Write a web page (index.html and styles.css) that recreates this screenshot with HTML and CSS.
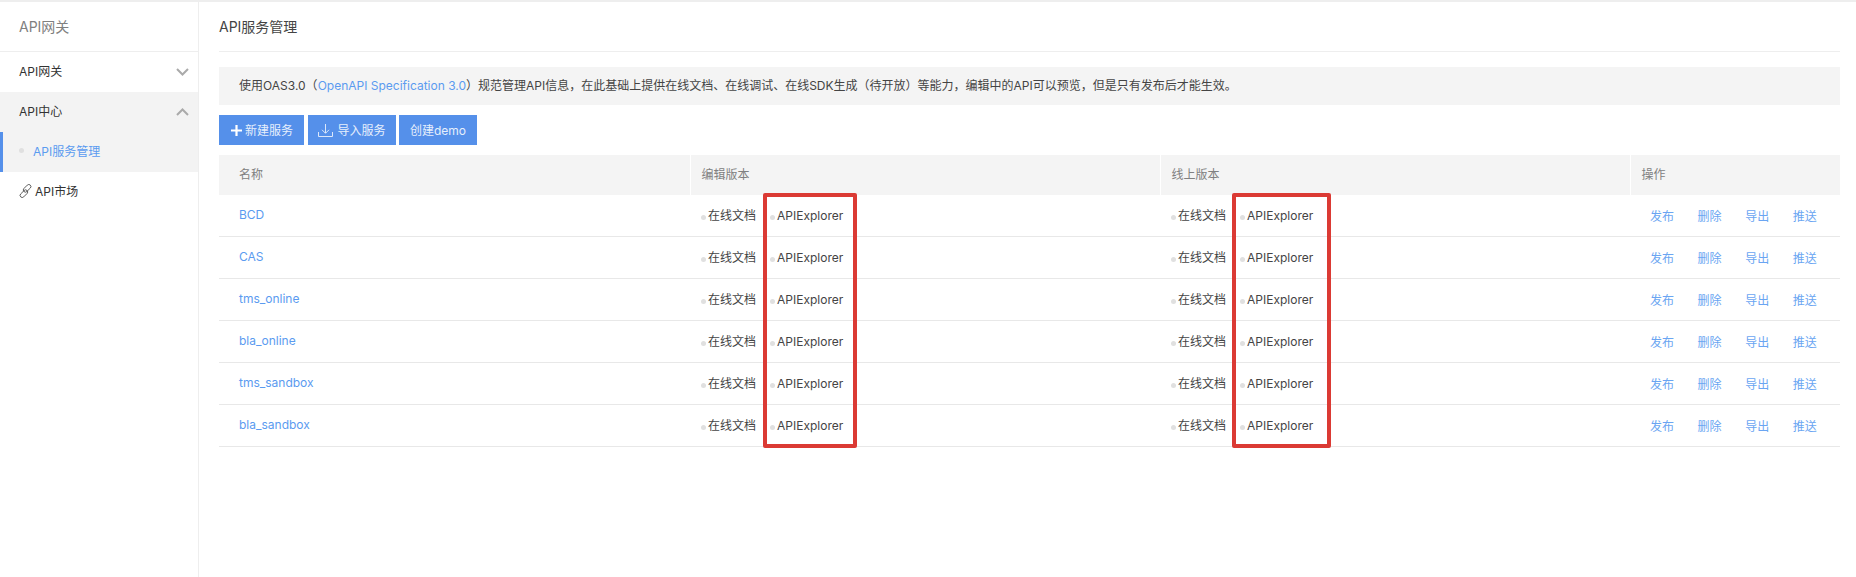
FILE: index.html
```html
<!DOCTYPE html>
<html>
	<head>
		<meta charset="utf-8" />
		<link rel="stylesheet" href="styles.css">
		<title>API服务管理</title>
	</head>
	<body>
		<div class="page">
			<div class="side">
				<div class="side-hd">API网关</div>
				<div class="menu">
					<span>API网关</span>
					<svg class="arrow" width="13" height="8" viewBox="0 0 13 8"><path d="M1 1l5.500 5.500L12 1" fill="none" stroke="#aaa" stroke-width="2"/></svg>
				</div>
				<div class="menu menu-open">
					<span>API中心</span>
					<svg class="arrow" width="13" height="8" viewBox="0 0 13 8"><path d="M1 7l5.500-5.500L12 7" fill="none" stroke="#aaa" stroke-width="2"/></svg>
				</div>
				<div class="sub"><i class="dot"></i><a>API服务管理</a></div>
				<div class="menu menu-link">
					<svg width="13" height="14" viewBox="0 0 13 14"><g fill="none" stroke="#555" stroke-width=".9"><rect x="6" y="-.2" width="4.200" height="9" rx="2.100" transform="rotate(45 8.100 4.300)"/><rect x="2.800" y="5.200" width="4.200" height="9" rx="2.100" transform="rotate(45 4.900 9.700)"/></g></svg>
					<span>API市场</span>
				</div>
			</div>
			<div class="main">
				<div class="title">API服务管理</div>
				<div class="info">使用OAS3.0（<a>OpenAPI Specification 3.0</a>）规范管理API信息，在此基础上提供在线文档、在线调试、在线SDK生成（待开放）等能力，编辑中的API可以预览，但是只有发布后才能生效。</div>
				<div class="btns">
					<a class="btn btn-new">
						<svg width="13" height="13" viewBox="0 0 13 13"><path d="M6.500 1v11M1 6.500h11" stroke="#fff" stroke-width="2.200"/></svg>
						新建服务
					</a>
					<a class="btn btn-import">
						<svg width="15" height="14" viewBox="0 0 15 14"><path d="M7.500 1v9M4 6.800l3.500 3.500L11 6.800M.5 9v4.500h14V9" fill="none" stroke="#dbe7fa" stroke-width="1"/></svg>
						导入服务
					</a>
					<a class="btn btn-demo">创建demo</a>
				</div>
				<div class="tbl-wrap">
					<table class="tbl">
						<colgroup>
							<col class="c-name"><col class="c-ver"><col class="c-ver2"><col class="c-op">
						</colgroup>
						<thead>
							<tr><th class="th-name">名称</th><th>编辑版本</th><th>线上版本</th><th>操作</th></tr>
						</thead>
						<tbody>
							<tr>
								<td class="td-name"><a>BCD</a></td>
								<td><span class="doc"><i class="dot"></i>在线文档</span><span class="doc"><i class="dot"></i>APIExplorer</span></td>
								<td><span class="doc"><i class="dot"></i>在线文档</span><span class="doc"><i class="dot"></i>APIExplorer</span></td>
								<td class="ops"><a>发布</a><a>删除</a><a>导出</a><a>推送</a></td>
							</tr>
							<tr>
								<td class="td-name"><a>CAS</a></td>
								<td><span class="doc"><i class="dot"></i>在线文档</span><span class="doc"><i class="dot"></i>APIExplorer</span></td>
								<td><span class="doc"><i class="dot"></i>在线文档</span><span class="doc"><i class="dot"></i>APIExplorer</span></td>
								<td class="ops"><a>发布</a><a>删除</a><a>导出</a><a>推送</a></td>
							</tr>
							<tr>
								<td class="td-name"><a>tms_online</a></td>
								<td><span class="doc"><i class="dot"></i>在线文档</span><span class="doc"><i class="dot"></i>APIExplorer</span></td>
								<td><span class="doc"><i class="dot"></i>在线文档</span><span class="doc"><i class="dot"></i>APIExplorer</span></td>
								<td class="ops"><a>发布</a><a>删除</a><a>导出</a><a>推送</a></td>
							</tr>
							<tr>
								<td class="td-name"><a>bla_online</a></td>
								<td><span class="doc"><i class="dot"></i>在线文档</span><span class="doc"><i class="dot"></i>APIExplorer</span></td>
								<td><span class="doc"><i class="dot"></i>在线文档</span><span class="doc"><i class="dot"></i>APIExplorer</span></td>
								<td class="ops"><a>发布</a><a>删除</a><a>导出</a><a>推送</a></td>
							</tr>
							<tr>
								<td class="td-name"><a>tms_sandbox</a></td>
								<td><span class="doc"><i class="dot"></i>在线文档</span><span class="doc"><i class="dot"></i>APIExplorer</span></td>
								<td><span class="doc"><i class="dot"></i>在线文档</span><span class="doc"><i class="dot"></i>APIExplorer</span></td>
								<td class="ops"><a>发布</a><a>删除</a><a>导出</a><a>推送</a></td>
							</tr>
							<tr>
								<td class="td-name"><a>bla_sandbox</a></td>
								<td><span class="doc"><i class="dot"></i>在线文档</span><span class="doc"><i class="dot"></i>APIExplorer</span></td>
								<td><span class="doc"><i class="dot"></i>在线文档</span><span class="doc"><i class="dot"></i>APIExplorer</span></td>
								<td class="ops"><a>发布</a><a>删除</a><a>导出</a><a>推送</a></td>
							</tr>
						</tbody>
					</table>
					<!-- red marks over the table -->
					<div class="mark mark-a"></div>
					<div class="mark mark-b"></div>
				</div>
			</div>
		</div>
	</body>
</html>
```

FILE: styles.css
```css
html,body{
	padding:0;
	margin:0;
	background-color:#fff;
}
body{
	font-family:Inter, "Noto Sans CJK SC", sans-serif;
	font-size:12px;
	color:#444;
}
a{
	color:#5b9bf0;
}
.page{
	display:flex;
	height:575px;
	border-top:2px solid #eee;
	overflow:hidden;
}

/* sidebar */
.side{
	width:198px;
	flex:none;
	border-right:1px solid #eee;
}
.side-hd{
	height:49px;
	line-height:50px;
	padding-left:19px;
	font-size:14px;
	color:#808080;
	border-bottom:1px solid #eee;
}
.menu{
	display:flex;
	align-items:center;
	justify-content:space-between;
	height:37px;
	padding:0 9px 3px 19px;
	color:#333;
}
.menu .arrow{
	margin-top:3px;
}
.menu-open{
	background-color:#f3f3f3;
}
.menu-link{
	justify-content:flex-start;
	gap:3px;
}
.sub{
	display:flex;
	align-items:center;
	height:37px;
	padding:0 0 3px 16px;
	border-left:3px solid #5590ea;
	background-color:#f3f3f3;
}
.sub .dot{
	margin-right:9px;
}
.dot{
	display:inline-block;
	width:5px;
	height:5px;
	border-radius:50%;
	background-color:#e0e0e0;
}

/* main */
.main{
	flex:1;
	min-width:0;
	padding:0 16px 0 20px;
}
.title{
	height:49px;
	line-height:50px;
	font-size:14px;
	color:#444;
	border-bottom:1px solid #eee;
}
.info{
	height:38px;
	line-height:38px;
	margin-top:15px;
	padding-left:20px;
	background-color:#f4f4f4;
	color:#444;
	white-space:nowrap;
}
.btns{
	display:flex;
	margin-top:10px;
}
.btn{
	display:flex;
	align-items:center;
	justify-content:center;
	gap:2px;
	height:28px;
	padding-bottom:2px;
	background-color:#5590ea;
	color:#e6effc;
}
.btn svg{
	margin-top:2px;
}
.btn-new{
	width:85px;
	margin-right:4px;
}
.btn-import{
	width:88px;
	gap:4px;
	margin-right:3px;
}
.btn-demo{
	width:78px;
}

/* table */
.tbl-wrap{
	position:relative;
	margin-top:10px;
}
.tbl{
	width:100%;
	table-layout:fixed;
	border-collapse:collapse;
}
.c-name{
	width:471px;
}
.c-ver{
	width:470px;
}
.c-ver2{
	width:470px;
}
.tbl th{
	height:36px;
	padding:0 0 4px 11px;
	text-align:left;
	font-weight:normal;
	color:#808080;
	background-color:#f4f4f4;
	border-left:1px solid #fff;
}
.tbl th.th-name{
	padding-left:20px;
	border-left:0;
}
.tbl td{
	height:38px;
	padding:0 0 3px 11px;
	border-bottom:1px solid #e8e8e8;
	white-space:nowrap;
}
.tbl td.td-name{
	padding-left:20px;
}
.doc{
	display:inline-block;
	margin-right:14px;
	color:#444;
}
.doc .dot{
	margin-right:2px;
	vertical-align:0;
}
.tbl td.ops{
	padding-left:20px;
}
.ops a{
	display:inline-block;
	margin-right:23.600px;
	color:#6aa5f2;
	position:relative;
	top:1px;
}

/* red marks */
.mark{
	position:absolute;
	top:38px;
	height:255px;
	border:4px solid #db3a34;
	border-radius:2px;
	box-sizing:border-box;
}
.mark-a{
	left:544px;
	width:94px;
}
.mark-b{
	left:1013px;
	width:99px;
}
```
